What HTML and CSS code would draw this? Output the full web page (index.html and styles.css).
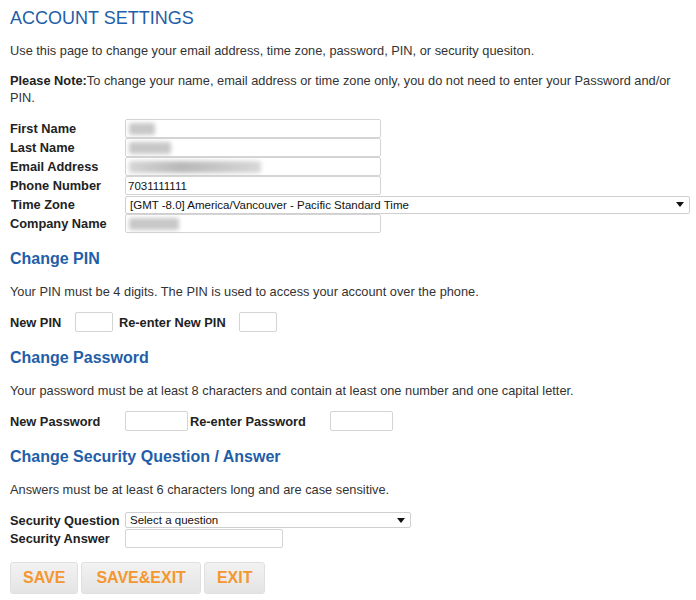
FILE: index.html
```html
<!DOCTYPE html>
<html>
<head>
<meta charset="utf-8">
<link rel="stylesheet" href="styles.css">
</head>
<body>
<div class="page">
  <h1 class="title">ACCOUNT SETTINGS</h1>
  <p class="intro">Use this page to change your email address, time zone, password, PIN, or security quesiton.</p>
  <p class="note"><b>Please Note:</b>To change your name, email address or time zone only, you do not need to enter your Password and/or PIN.</p>

  <div class="grid">
    <label class="lbl">First Name</label>
    <div class="field wide"><span class="blur b1"></span></div>
    <label class="lbl">Last Name</label>
    <div class="field wide"><span class="blur b2"></span></div>
    <label class="lbl">Email Address</label>
    <div class="field wide"><span class="blur b3"></span></div>
    <label class="lbl">Phone Number</label>
    <div class="field wide"><span class="val">7031111111</span></div>
    <label class="lbl tz">Time Zone</label>
    <div class="select full"><span class="val">[GMT -8.0] America/Vancouver - Pacific Standard Time</span><span class="arrow"></span></div>
    <label class="lbl">Company Name</label>
    <div class="field wide"><span class="blur b4"></span></div>
  </div>

  <h2 class="sec">Change PIN</h2>
  <p class="desc">Your PIN must be 4 digits. The PIN is used to access your account over the phone.</p>
  <div class="row pinrow">
    <label class="lbl pinl">New PIN</label>
    <div class="field pin"></div>
    <label class="lbl pinl2">Re-enter New PIN</label>
    <div class="field pin"></div>
  </div>

  <h2 class="sec">Change Password</h2>
  <p class="desc">Your password must be at least 8 characters and contain at least one number and one capital letter.</p>
  <div class="row pwrow">
    <label class="lbl col1">New Password</label>
    <div class="field pw"></div>
    <label class="lbl pwl2">Re-enter Password</label>
    <div class="field pw"></div>
  </div>

  <h2 class="sec">Change Security Question / Answer</h2>
  <p class="desc">Answers must be at least 6 characters long and are case sensitive.</p>
  <div class="grid secgrid">
    <label class="lbl">Security Question</label>
    <div class="select q"><span class="val">Select a question</span><span class="arrow"></span></div>
    <label class="lbl">Security Answer</label>
    <div class="field ans"></div>
  </div>

  <div class="buttons">
    <button class="btn">SAVE</button>
    <button class="btn btn2">SAVE&amp;EXIT</button>
    <button class="btn">EXIT</button>
  </div>
</div>
</body>
</html>
```

FILE: styles.css
```css
html, body {
  margin: 0;
  padding: 0;
  background: #ffffff;
}
body {
  font-family: "Liberation Sans", Arial, sans-serif;
  font-size: 12.8px;
  color: #333333;
}
.page {
  padding: 8px 0 0 10px;
}
.title {
  margin: 0;
  font-size: 18px;
  font-weight: normal;
  color: #1f5ea8;
  line-height: 21px;
}
.intro {
  margin: 13px 0 0;
  line-height: 17px;
}
.note {
  margin: 13px 0 0;
  line-height: 17px;
  padding-right: 10px;
}
.note b {
  color: #222;
}
.grid {
  margin-top: 13px;
  display: grid;
  grid-template-columns: 115px auto;
  grid-auto-rows: 19px;
  align-items: center;
}
.lbl {
  font-weight: bold;
  color: #222222;
  white-space: nowrap;
}
.tz {
  padding-left: 1px;
}
.field {
  box-sizing: border-box;
  height: 19px;
  border: 1px solid #d4d4d4;
  border-radius: 2px;
  background: #fff;
  position: relative;
  display: flex;
  align-items: center;
}
.wide {
  width: 256px;
}
.val {
  font-size: 11.5px;
  color: #111;
  padding-left: 2px;
  white-space: nowrap;
}
.blur {
  display: block;
  height: 12px;
  margin-left: 3px;
  background: #c8c8c8;
  filter: blur(2px);
  border-radius: 2px;
}
.b1 { width: 26px; }
.b2 { width: 42px; }
.b3 { width: 132px; background: linear-gradient(90deg, #d6d6d6, #b8b8b8 40%, #d8d8d8); }
.b4 { width: 50px; }
.select {
  box-sizing: border-box;
  height: 18px;
  border: 1px solid #cfcfcf;
  border-radius: 2px;
  background: #fff;
  display: flex;
  align-items: center;
  justify-content: space-between;
  padding-right: 5px;
}
.select .val {
  padding-left: 4px;
}
.full {
  width: 565px;
}
.arrow {
  width: 0;
  height: 0;
  border-left: 4px solid transparent;
  border-right: 4px solid transparent;
  border-top: 5px solid #111;
}
.sec {
  margin: 16px 0 0;
  font-size: 16px;
  font-weight: bold;
  color: #1f5ea8;
  line-height: 19px;
}
.desc {
  margin: 15px 0 0;
  line-height: 17px;
}
.row {
  margin-top: 12px;
  display: flex;
  align-items: center;
  height: 20px;
}
.pin {
  width: 38px;
  height: 20px;
}
.pinl {
  width: 65px;
}
.pinl2 {
  margin-left: 6px;
  width: 120px;
}
.col1 {
  width: 115px;
}
.pw {
  width: 63px;
  height: 20px;
}
.pwl2 {
  margin-left: 2px;
  width: 140px;
}
.secgrid {
  margin-top: 13px;
  grid-auto-rows: 18px;
}
.q {
  width: 286px;
  height: 16px;
}
.ans {
  width: 158px;
}
.buttons {
  margin-top: 15px;
  display: flex;
  gap: 3px;
}
.btn {
  height: 32px;
  padding: 0 12px;
  font-family: "Liberation Sans", Arial, sans-serif;
  font-size: 16px;
  font-weight: bold;
  color: #f4972f;
  background: linear-gradient(#f2f2f2, #e4e4e4);
  border: 1px solid #e0e0e0;
  border-radius: 3px;
}
.btn2 {
  padding: 0 14px;
}
```
